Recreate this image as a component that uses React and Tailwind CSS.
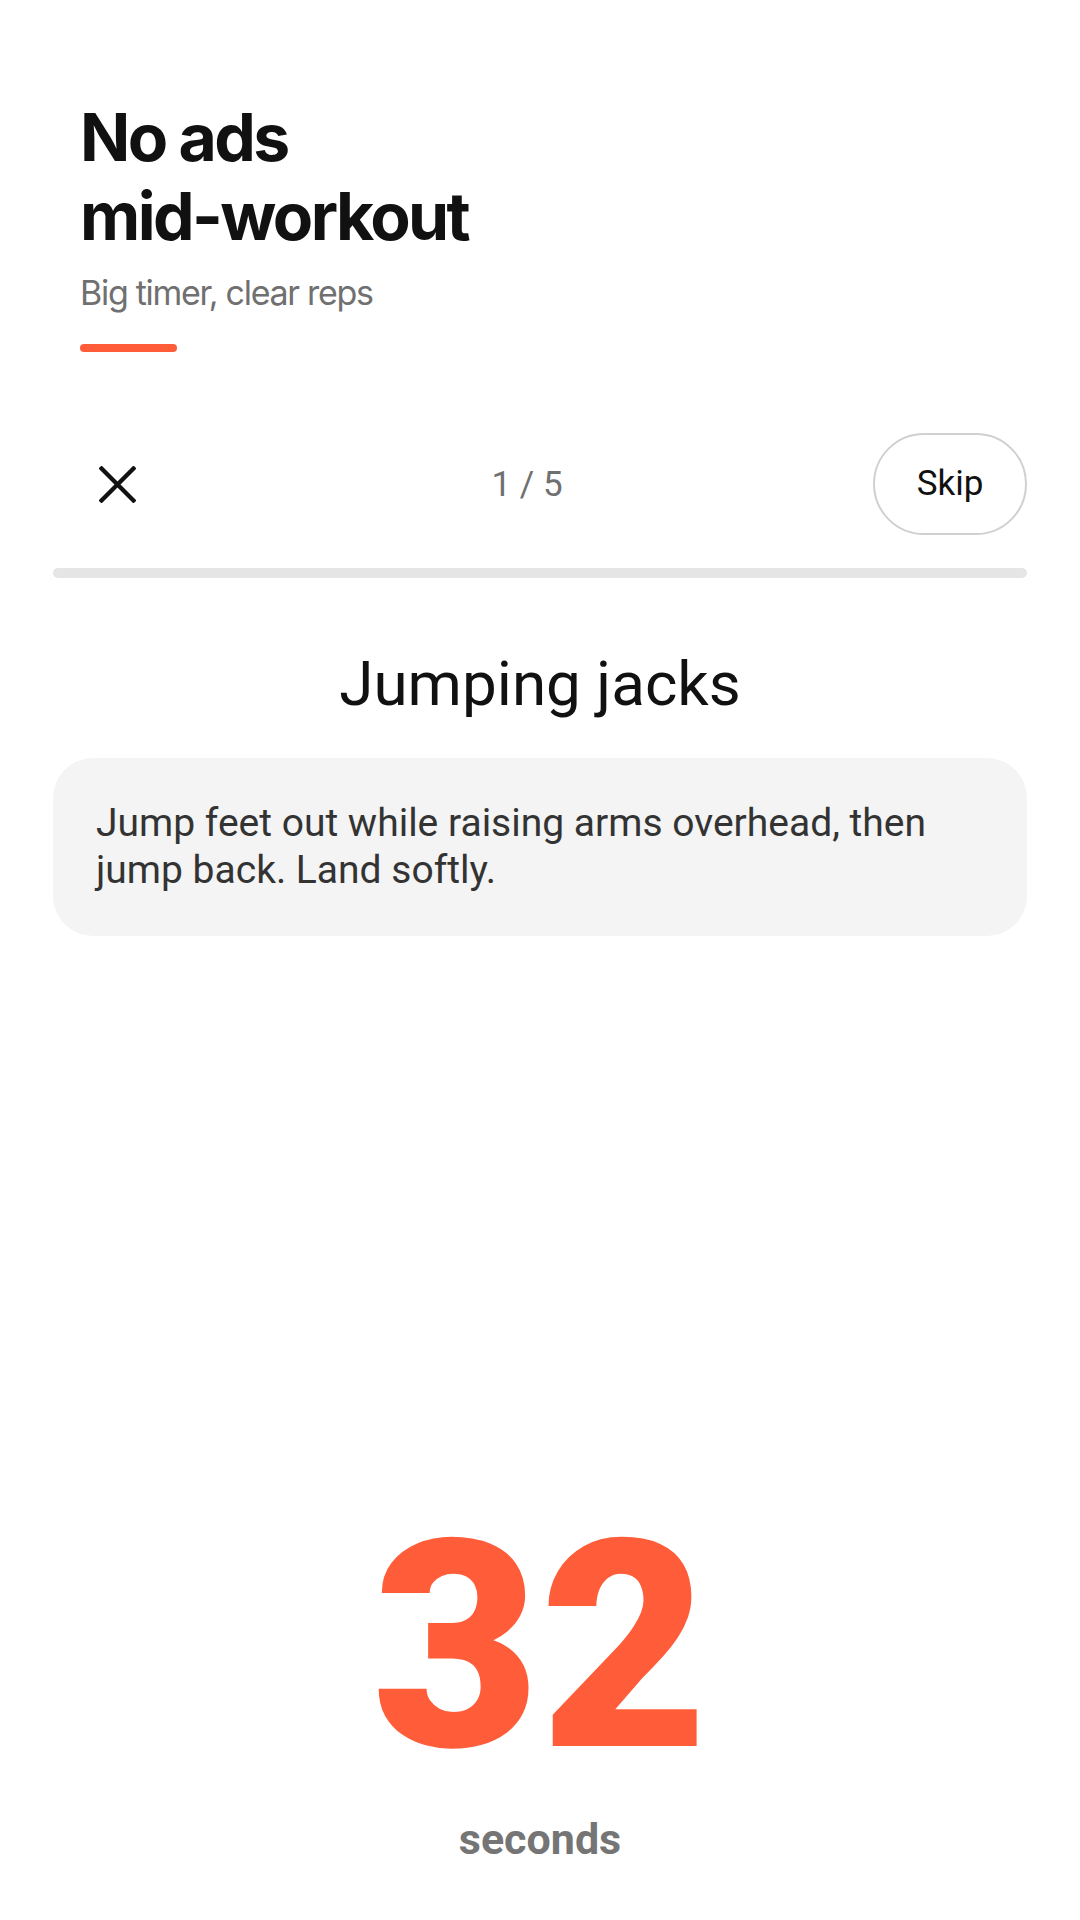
export default function App() {
  return (
    <div className="min-h-[1920px] w-[1080px] bg-white flex flex-col">
      {/* Header */}
      <div className="px-[80px] pt-[98px]">
        <h1 className="font-['Inter',sans-serif] font-bold text-[66px] leading-[79px] text-[#111111] tracking-[-2.6px]">
          No ads
          <br />
          mid-workout
        </h1>
        <p className="mt-[16px] font-['Inter',sans-serif] text-[34px] leading-[41px] text-[#707070] tracking-[-1.3px]">
          Big timer, clear reps
        </p>
        <div className="mt-[31px] h-[8px] w-[97px] rounded-full bg-[#ff5c39]" />
      </div>

      {/* Workout content */}
      <div className="px-[53px] pt-[81px] flex flex-col flex-1 font-['Roboto',sans-serif]">
        <div className="flex items-center justify-between h-[102px]">
          <button className="w-[128px] h-[102px] flex items-center justify-center">
            <svg width="37" height="37" viewBox="0 0 36 36">
              <path d="M1 1 L35 35 M35 1 L1 35" stroke="#111111" strokeWidth="4.2" fill="none" />
            </svg>
          </button>
          <div className="text-[35px] text-[#707070] leading-none">1 / 5</div>
          <button className="w-[154px] h-[102px] rounded-full border-2 border-[#d0d0d0] flex items-center justify-center text-[35px] text-[#111111]">
            Skip
          </button>
        </div>

        <div className="mt-[33px] h-[10px] w-full rounded-full bg-[#e5e5e5]" />

        <h2 className="mt-[69px] text-center text-[62px] leading-[74px] text-[#111111]">
          Jumping jacks
        </h2>

        <div className="mt-[37px] rounded-[40px] bg-[#f4f4f4] px-[43px] py-[42px]">
          <p className="text-[39px] leading-[47px] text-[#333333]">
            Jump feet out while raising arms overhead, then jump back. Land softly.
          </p>
        </div>

        <div className="flex-1" />

        <div className="flex flex-col items-center pb-[56px]">
          <div className="text-[290px] leading-[290px] font-black text-[#ff5c39]">32</div>
          <div className="mt-[22px] text-[43px] leading-[50px] font-bold text-[#757575]">seconds</div>
        </div>
      </div>
    </div>
  );
}
